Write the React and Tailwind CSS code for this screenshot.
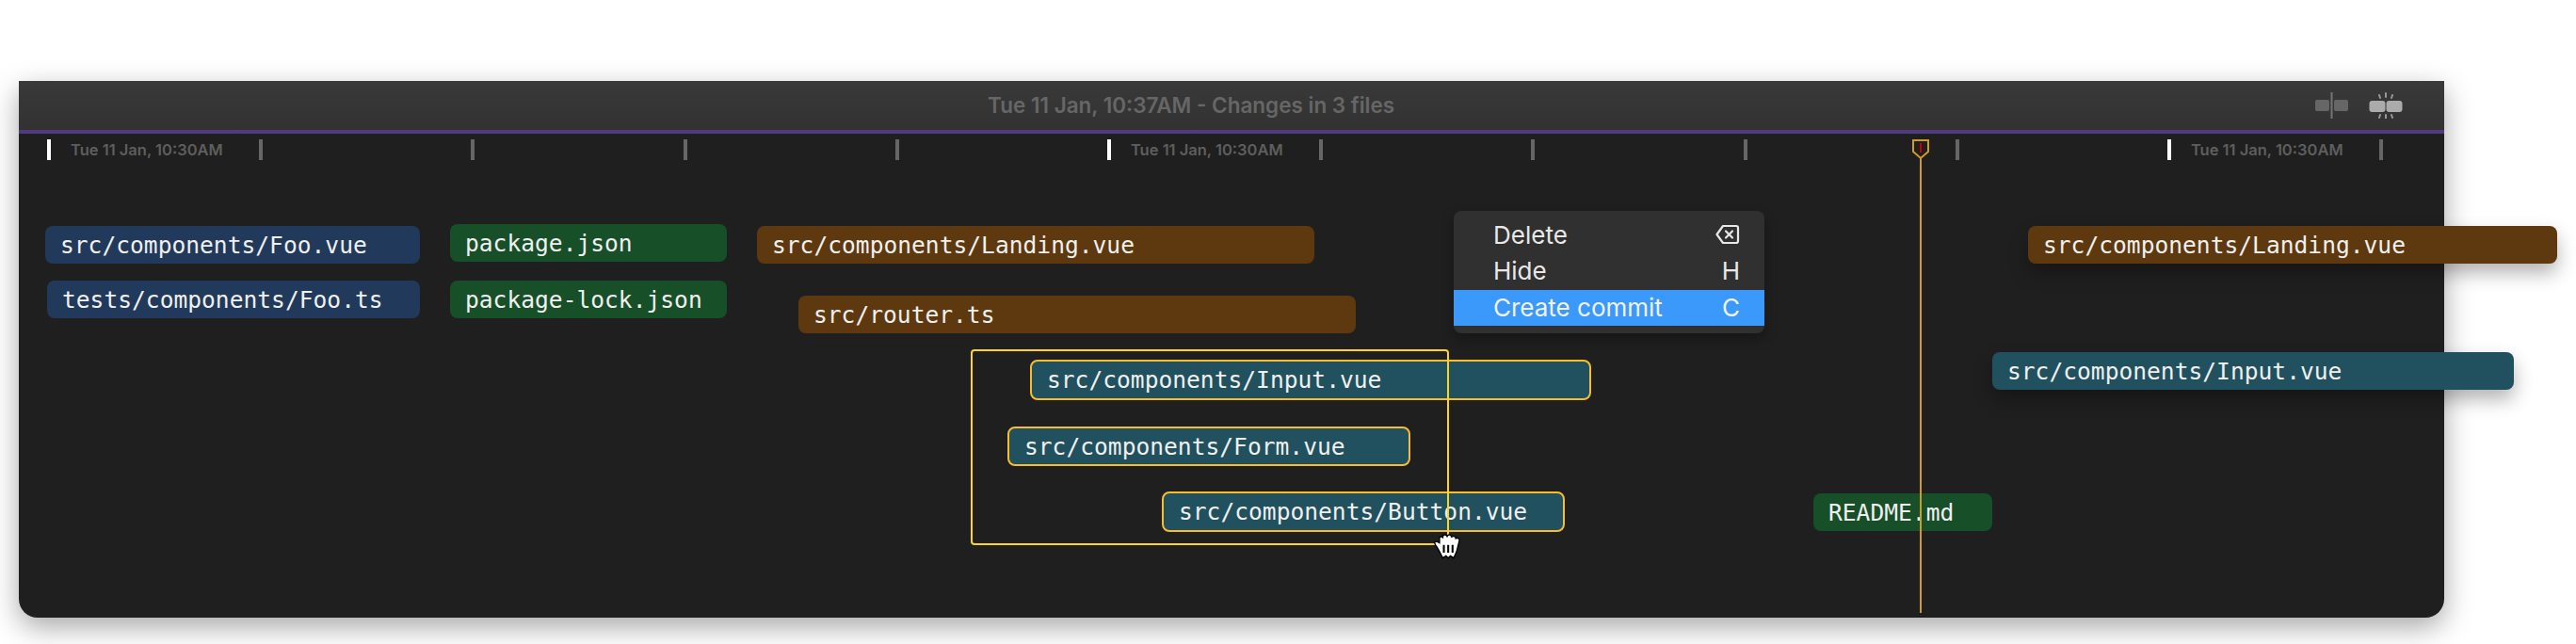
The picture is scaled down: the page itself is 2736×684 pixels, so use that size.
import React from 'react';

const ticks = [true, false, false, false, false, true, false, false, false, false, true, false];

const chips = [
    { label: 'src/components/Foo.vue', cls: 'left-[28px] top-[98px] w-[398px] h-[40px] bg-[#21395a]' },
    { label: 'tests/components/Foo.ts', cls: 'left-[30px] top-[156px] w-[396px] h-[40px] bg-[#21395a]' },
    { label: 'package.json', cls: 'left-[458px] top-[96px] w-[294px] h-[40px] bg-[#174f29]' },
    { label: 'package-lock.json', cls: 'left-[458px] top-[156px] w-[294px] h-[40px] bg-[#174f29]' },
    { label: 'src/components/Landing.vue', cls: 'left-[784px] top-[98px] w-[592px] h-[40px] bg-[#5e390f]' },
    { label: 'src/router.ts', cls: 'left-[828px] top-[172px] w-[592px] h-[40px] bg-[#5e390f]' },
    { label: 'src/components/Input.vue', cls: 'left-[1074px] top-[240px] w-[596px] h-[43px] bg-[#21505e] border-2 border-[#f9bc2f]' },
    { label: 'src/components/Form.vue', cls: 'left-[1050px] top-[311px] w-[428px] h-[42px] bg-[#21505e] border-2 border-[#f9bc2f]' },
    { label: 'src/components/Button.vue', cls: 'left-[1214px] top-[380px] w-[428px] h-[43px] bg-[#21505e] border-2 border-[#f9bc2f]' },
    { label: 'README.md', cls: 'left-[1906px] top-[382px] w-[190px] h-[40px] bg-[#174f29]' },
    { label: 'src/components/Landing.vue', cls: 'left-[2134px] top-[98px] w-[562px] h-[40px] bg-[#5e390f] shadow-[0_10px_20px_rgba(0,0,0,0.3)]' },
    { label: 'src/components/Input.vue', cls: 'left-[2096px] top-[232px] w-[554px] h-[40px] bg-[#21505e] shadow-[0_10px_20px_rgba(0,0,0,0.3)]' },
];

const menuItems = [
    { label: 'Delete' },
    { label: 'Hide', key: 'H' },
    { label: 'Create commit', key: 'C', active: true },
];

const SplitIcon = () => (
    <svg width="36" height="28" viewBox="0 0 36 28" fill="none">
        <rect x="0" y="8" width="15" height="12" rx="2" fill="#666" />
        <rect x="20" y="8" width="15" height="12" rx="2" fill="#666" />
        <rect x="16.5" y="0" width="2" height="28" fill="#747474" />
    </svg>
);

const MergeIcon = () => (
    <svg width="36" height="28" viewBox="0 0 36 28" fill="none">
        <rect x="0.5" y="9" width="17" height="12" rx="3" fill="#ababab" />
        <rect x="18.5" y="9" width="17" height="12" rx="3" fill="#ababab" />
        <g stroke="#989898" strokeWidth="2" strokeLinecap="round">
            <path d="M18 1v4M11 3l1 3M25 3l-1 3M18 24v4M11 27l1-3M25 27l-1-3" />
        </g>
    </svg>
);

const BackspaceIcon = () => (
    <svg width="26" height="26" viewBox="0 0 26 26" fill="none" stroke="#e8e8e8" strokeWidth="2.2" strokeLinejoin="round" strokeLinecap="round">
        <path d="M8 4h14a2 2 0 0 1 2 2v14a2 2 0 0 1-2 2H8l-6.5-9z" />
        <path d="M11 9.5l7 7M18 9.5l-7 7" />
    </svg>
);

const GrabCursor = () => (
    <svg width="30" height="28" viewBox="0 0 26 24">
        <path
            d="M3 12 C1 10 1 7 4 8 L6 9 L6 5 C6 3 8 3 9 4 C9 1 12 1 13 3 C14 1 17 1 17 4 C18 2 21 3 21 5 C23 4 25 5 24 8 L22 16 C21 19 20 21 19 23 L16 21 L14 23 L12 21 L9 23 C7 19 5 15 3 12 Z"
            fill="#fff"
            stroke="#000"
            strokeWidth="1.2"
        />
        <path d="M10 11v7M14 11v7M18 11v7" stroke="#000" strokeWidth="1.8" />
    </svg>
);

const Playhead = () => (
    <svg width="20" height="22" viewBox="0 0 20 22" fill="none" className="absolute left-[-9px] top-[-1px]">
        <path d="M2 1h16v12l-8 7-8-7z" fill="#1f1f1f" stroke="#d09a28" strokeWidth="2" />
        <rect x="9" y="4" width="2" height="10" fill="#cc0000" />
    </svg>
);

export default function App() {
    return (
        <div className="w-[2736px] h-[684px] bg-white pt-[86px] pl-[20px] overflow-hidden font-['Inter',sans-serif]">
            <div className="w-[2576px] h-[570px] rounded-b-[20px] bg-[#1f1f1f] flex flex-col shadow-[0_10px_30px_rgba(0,0,0,0.35)]">
                {/* Title bar */}
                <div className="h-[52px] shrink-0 bg-gradient-to-b from-[#393939] to-[#323232] flex items-center pl-[1029px] pr-[44px] justify-between">
                    <span className="text-[22.5px] font-semibold text-[#666] whitespace-nowrap">Tue 11 Jan, 10:37AM - Changes in 3 files</span>
                    <div className="flex items-center gap-[21px]">
                        <SplitIcon />
                        <MergeIcon />
                    </div>
                </div>
                <div className="h-[4px] shrink-0 bg-[#513a7e]" />

                {/* Timeline */}
                <div className="relative flex-1">
                    <div className="flex pl-[30px] pt-[6px]">
                        {ticks.map((major, i) => (
                            <div key={i} className="w-[225.2px] flex shrink-0">
                                <div className={major ? 'w-1 h-[22px] bg-white' : 'w-1 h-[22px] bg-[#666]'} />
                                {major && <span className="ml-[21px] h-[22px] leading-[22px] text-[16.5px] font-semibold text-[#5e5e5e] whitespace-nowrap">Tue 11 Jan, 10:30AM</span>}
                            </div>
                        ))}
                    </div>

                    {chips.map((chip, i) => (
                        <div key={i} className={`absolute flex items-center rounded-[8px] pl-[16px] pt-[2px] font-['DejaVu_Sans_Mono',monospace] text-[24.6px] font-light text-[#f0f0f0] whitespace-nowrap ${chip.cls}`}>
                            {chip.label}
                        </div>
                    ))}

                    {/* Drag selection */}
                    <div className="absolute left-[1011px] top-[229px] w-[508px] h-[208px] border-2 border-[#fdd426] rounded-[4px]" />

                    {/* Context menu */}
                    <div className="absolute left-[1524px] top-[82px] w-[330px] rounded-[8px] bg-[#303030] pt-[6px] pb-[8px] shadow-[0_6px_14px_rgba(0,0,0,0.3)]">
                        {menuItems.map((item) => (
                            <div key={item.label} className={item.active ? 'h-[38px] mt-[2px] pb-[2px] pl-[42px] pr-[26px] flex items-center justify-between bg-[#3b99fc] text-[26px] text-[#f2f2f2]' : 'h-[38px] pl-[42px] pr-[26px] flex items-center justify-between text-[26px] text-[#e8e8e8]'}>
                                <span>{item.label}</span>
                                {item.key ? <span>{item.key}</span> : <BackspaceIcon />}
                            </div>
                        ))}
                    </div>

                    {/* Playhead */}
                    <div className="absolute left-[2019px] top-[7px] w-[2px] h-[502px] bg-[#d09a28]">
                        <Playhead />
                    </div>

                    <div className="absolute left-[1502px] top-[424px]">
                        <GrabCursor />
                    </div>
                </div>
            </div>
        </div>
    );
}
